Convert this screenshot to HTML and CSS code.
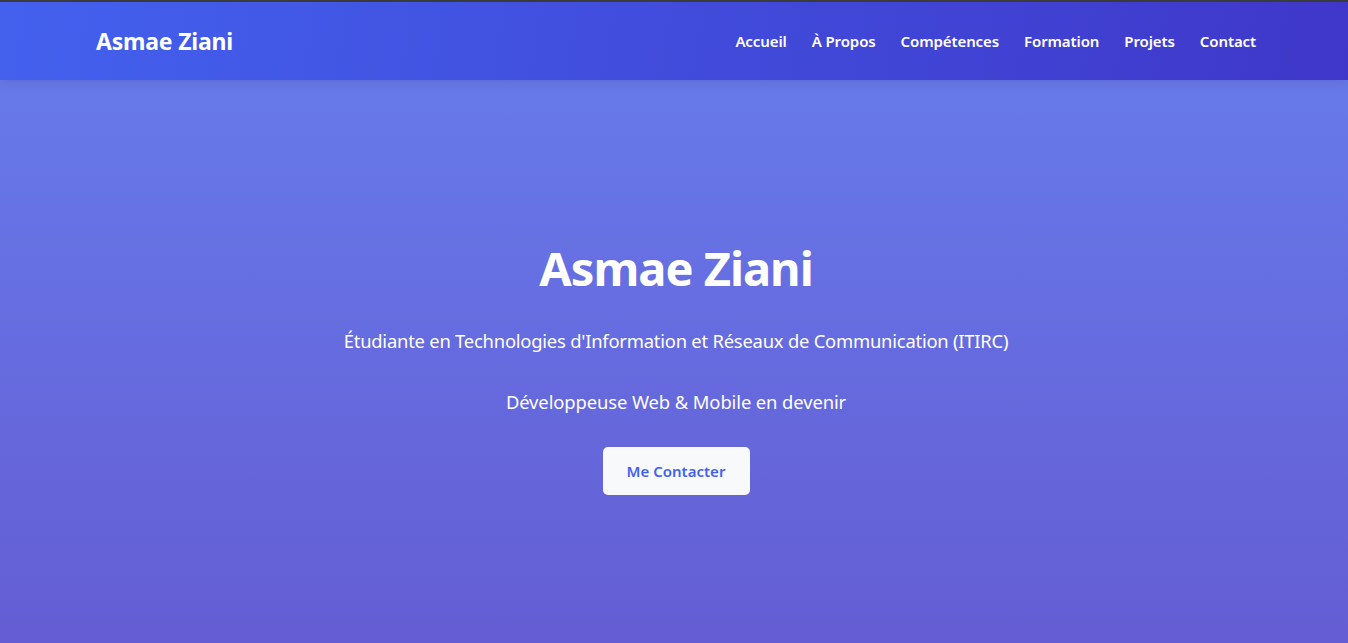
FILE: index.html
```html
<!DOCTYPE html>
<html lang="fr">
<head>
<meta charset="utf-8">
<title>Asmae Ziani</title>
<link rel="stylesheet" href="styles.css">
</head>
<body>
<header class="site-header">
  <div class="container nav-bar">
    <a class="logo" href="#">Asmae Ziani</a>
    <nav class="nav-links">
      <a href="#">Accueil</a>
      <a href="#">À Propos</a>
      <a href="#">Compétences</a>
      <a href="#">Formation</a>
      <a href="#">Projets</a>
      <a href="#">Contact</a>
    </nav>
  </div>
</header>
<section class="hero">
  <div class="hero-content">
    <h1 class="hero-title">Asmae Ziani</h1>
    <p class="hero-sub hero-sub-long">Étudiante en Technologies d'Information et Réseaux de Communication (ITIRC)</p>
    <p class="hero-sub">Développeuse Web &amp; Mobile en devenir</p>
    <a class="btn" href="#">Me Contacter</a>
  </div>
</section>
</body>
</html>
```
FILE: styles.css
```css
* { box-sizing: border-box; }
html, body { margin: 0; padding: 0; }
body {
  font-family: "Noto Sans", "Open Sans", sans-serif;
  color: #fff;
  background: #645dd3;
  border-top: 2px solid #3b3b3b;
  height: 643px;
  overflow: hidden;
}
a { text-decoration: none; color: inherit; }

.site-header {
  background: linear-gradient(100deg, #4361ee 0%, #3f37c9 100%);
  height: 78px;
  box-shadow: 0 2px 10px rgba(0,0,0,0.1);
  position: relative;
  z-index: 2;
}
.container {
  max-width: 1200px;
  margin: 0 auto;
  padding: 0 20px;
}
.nav-bar {
  height: 100%;
  display: flex;
  align-items: center;
  justify-content: space-between;
  padding-left: 96px;
  padding-right: 92px;
  max-width: none;
}
.logo {
  font-size: 23px;
  font-weight: 700;
  letter-spacing: -0.2px;
}
.nav-links {
  display: flex;
  gap: 25px;
}
.nav-links a {
  font-size: 15px;
  font-weight: 600;
  letter-spacing: -0.1px;
}

.hero {
  height: 563px;
  background: linear-gradient(180deg, #6779e9 0%, #645dd3 100%);
  display: flex;
  flex-direction: column;
  align-items: center;
  text-align: center;
  padding-top: 160px;
  padding-left: 4px;
}
.hero-content {
  display: flex;
  flex-direction: column;
  align-items: center;
}
.hero-title {
  margin: 0;
  font-size: 47px;
  font-weight: 700;
  line-height: 1.2;
  letter-spacing: -1px;
}
.hero-sub {
  margin: 0;
  font-size: 18.4px;
  line-height: 1.5;
  letter-spacing: -0.1px;
}
.hero-sub-long { letter-spacing: -0.22px; }
.hero-title + .hero-sub { margin-top: 31px; }
.hero-sub + .hero-sub { margin-top: 33px; }
.btn {
  display: inline-block;
  margin-top: 31px;
  width: 147px;
  height: 48px;
  line-height: 48px;
  background: #f8f9fa;
  color: #4361ee;
  border-radius: 5px;
  font-size: 15px;
  font-weight: 600;
  letter-spacing: 0;
}
```
